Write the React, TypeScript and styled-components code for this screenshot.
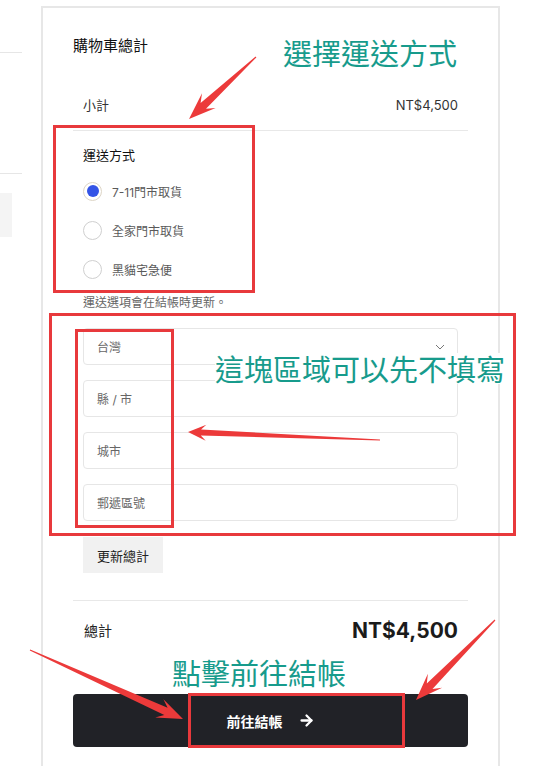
import React from 'react';
import styled, { createGlobalStyle } from 'styled-components';
import { ArrowRight } from 'lucide-react';

const GlobalStyle = createGlobalStyle`
  html, body { margin: 0; padding: 0; background: #fff; }
  body { font-family: Inter, "Noto Sans CJK TC", sans-serif; color: #222; }
  * { box-sizing: border-box; }
`;

const Page = styled.div`
  position: relative;
  width: 541px;
  height: 766px;
  overflow: hidden;
  display: flex;
  align-items: flex-start;
  gap: 19px;
`;

const LeftRail = styled.div`
  width: 22px;
  display: flex;
  flex-direction: column;
  padding-top: 52px;
`;

const RailLine = styled.div<{ $gap: number }>`
  width: 22px;
  height: 1px;
  margin-top: ${(p) => p.$gap}px;
  background: #e6e6e6;
  &:first-child { margin-top: 0; }
`;

const RailBlock = styled.div`
  width: 12px;
  height: 44px;
  margin-top: 19px;
  background: #f4f4f4;
`;

const Card = styled.section`
  width: 459px;
  height: 770px;
  margin-top: 6px;
  border: 2px solid #e7e7e7;
  border-bottom: none;
  padding: 0 30px;
  display: flex;
  flex-direction: column;
`;

const Title = styled.h2`
  margin: 28px 0 0;
  font-size: 15px;
  line-height: 20px;
  font-weight: 400;
  color: #111;
`;

const SummaryRow = styled.div`
  display: flex;
  justify-content: space-between;
  padding: 39px 10px 15px;
  border-bottom: 1px solid #e8e8e8;
  font-size: 13px;
  line-height: 20px;
  color: #333;
`;

const ShippingCell = styled.div`
  padding: 0 10px;
  display: flex;
  flex-direction: column;
`;

const ShipHeading = styled.div`
  margin-top: 15px;
  font-size: 13px;
  line-height: 18px;
  font-weight: 400;
  color: #111;
`;

const RadioList = styled.div`
  margin-top: 17px;
  display: flex;
  flex-direction: column;
  gap: 19px;
`;

const RadioOption = styled.label`
  display: flex;
  align-items: center;
  gap: 10px;
  height: 20px;
  font-size: 12px;
  color: #5a5a5a;
`;

const RadioCircle = styled.span<{ $checked?: boolean }>`
  width: 19px;
  height: 19px;
  border-radius: 50%;
  border: 1px solid ${(p) => (p.$checked ? '#ddd5c6' : '#cfcfcf')};
  background: #fff;
  display: flex;
  align-items: center;
  justify-content: center;
  &::after {
    content: '';
    width: 12px;
    height: 12px;
    border-radius: 50%;
    background: ${(p) => (p.$checked ? '#3454e6' : 'transparent')};
  }
`;

const Note = styled.div`
  margin-top: 15px;
  font-size: 12px;
  line-height: 18px;
  color: #666;
`;

const FieldStack = styled.div`
  margin-top: 16px;
  display: flex;
  flex-direction: column;
  gap: 15px;
`;

const Field = styled.div`
  height: 37px;
  border: 1px solid #e6e6e6;
  border-radius: 4px;
  padding: 0 12px 0 13px;
  display: flex;
  align-items: center;
  justify-content: space-between;
  font-size: 12px;
  color: #666;
`;

const UpdateButton = styled.button`
  margin-top: 16px;
  align-self: flex-start;
  width: 80px;
  height: 36px;
  border: none;
  background: #f1f1f1;
  font-family: inherit;
  font-size: 13px;
  color: #222;
  padding: 0;
`;

const TotalRow = styled.div`
  margin-top: 27px;
  border-top: 1px solid #e8e8e8;
  padding: 18px 10px 0 11px;
  display: flex;
  justify-content: space-between;
  align-items: center;
`;

const TotalLabel = styled.span`
  font-size: 14px;
  line-height: 24px;
  color: #222;
`;

const TotalValue = styled.span`
  font-size: 21px;
  line-height: 24px;
  font-weight: 700;
  color: #1b1b1b;
`;

const CheckoutButton = styled.button`
  margin-top: 51px;
  width: 100%;
  height: 53px;
  border: none;
  border-radius: 4px;
  background: #212227;
  color: #fff;
  font-family: inherit;
  font-size: 14px;
  font-weight: 700;
  display: flex;
  align-items: center;
  justify-content: center;
  gap: 15px;
`;

/* ---------- annotation overlay ---------- */

const Overlay = styled.div`
  position: absolute;
  inset: 0;
  pointer-events: none;
`;

const RedBox = styled.div<{ $x: number; $y: number; $w: number; $h: number }>`
  position: absolute;
  left: ${(p) => p.$x}px;
  top: ${(p) => p.$y}px;
  width: ${(p) => p.$w}px;
  height: ${(p) => p.$h}px;
  border: 3px solid #e8393c;
`;

const Callout = styled.div<{ $x: number; $y: number }>`
  position: absolute;
  left: ${(p) => p.$x}px;
  top: ${(p) => p.$y}px;
  font-family: "Noto Sans CJK TC", sans-serif;
  font-size: 29px;
  line-height: 31px;
  color: #179b8c;
  background: #fff;
  white-space: nowrap;
`;

const ArrowLayer = styled.svg`
  position: absolute;
  left: 0;
  top: 0;
`;

type Arrow = { tx: number; ty: number; hx: number; hy: number; head: number; headW: number; shaftW: number };

const arrows: Arrow[] = [
  { tx: 256, ty: 57, hx: 189, hy: 119, head: 27, headW: 10, shaftW: 4 },
  { tx: 380, ty: 440, hx: 188, hy: 432, head: 18, headW: 8, shaftW: 3 },
  { tx: 30, ty: 650, hx: 183, hy: 719, head: 26, headW: 10, shaftW: 4 },
  { tx: 495, ty: 620, hx: 416, hy: 700, head: 27, headW: 10, shaftW: 4 },
];

function arrowPoints(a: Arrow): string {
  const dx = a.hx - a.tx;
  const dy = a.hy - a.ty;
  const L = Math.hypot(dx, dy);
  const ux = dx / L;
  const uy = dy / L;
  const nx = -uy;
  const ny = ux;
  const bx = a.hx - ux * a.head * 0.72;
  const by = a.hy - uy * a.head * 0.72;
  const wx = a.hx - ux * a.head;
  const wy = a.hy - uy * a.head;
  const t = 0.6;
  const pts = [
    [a.tx + nx * t, a.ty + ny * t],
    [bx + nx * a.shaftW, by + ny * a.shaftW],
    [wx + nx * a.headW, wy + ny * a.headW],
    [a.hx, a.hy],
    [wx - nx * a.headW, wy - ny * a.headW],
    [bx - nx * a.shaftW, by - ny * a.shaftW],
    [a.tx - nx * t, a.ty - ny * t],
  ];
  return pts.map((p) => `${p[0].toFixed(1)},${p[1].toFixed(1)}`).join(' ');
}

const Chevron = () => (
  <svg width="10" height="6" viewBox="0 0 10 6" fill="none">
    <path d="M1 1l4 4 4-4" stroke="#777" strokeWidth="1" />
  </svg>
);

const shippingOptions = [
  { label: '7-11門市取貨', checked: true },
  { label: '全家門市取貨', checked: false },
  { label: '黑貓宅急便', checked: false },
];

export default function App() {
  return (
    <>
      <GlobalStyle />
      <Page>
        <LeftRail>
          <RailLine $gap={0} />
          <RailLine $gap={120} />
          <RailBlock />
        </LeftRail>

        <Card>
          <Title>購物車總計</Title>
          <SummaryRow>
            <span>小計</span>
            <span>NT$4,500</span>
          </SummaryRow>

          <ShippingCell>
            <ShipHeading>運送方式</ShipHeading>
            <RadioList>
              {shippingOptions.map((o) => (
                <RadioOption key={o.label}>
                  <RadioCircle $checked={o.checked} />
                  {o.label}
                </RadioOption>
              ))}
            </RadioList>
            <Note>運送選項會在結帳時更新。</Note>
            <FieldStack>
              <Field>
                台灣
                <Chevron />
              </Field>
              <Field>縣 / 市</Field>
              <Field>城市</Field>
              <Field>郵遞區號</Field>
            </FieldStack>
            <UpdateButton>更新總計</UpdateButton>
          </ShippingCell>

          <TotalRow>
            <TotalLabel>總計</TotalLabel>
            <TotalValue>NT$4,500</TotalValue>
          </TotalRow>

          <CheckoutButton>
            前往結帳
            <ArrowRight size={17} strokeWidth={3.2} />
          </CheckoutButton>
        </Card>

        <Overlay>
          <RedBox $x={53} $y={125} $w={202} $h={168} />
          <RedBox $x={49} $y={313} $w={467} $h={223} />
          <RedBox $x={75} $y={329} $w={99} $h={199} />
          <RedBox $x={188} $y={693} $w={217} $h={55} />
          <Callout $x={283} $y={37}>選擇運送方式</Callout>
          <Callout $x={215} $y={353}>這塊區域可以先不填寫</Callout>
          <Callout $x={172} $y={657}>點擊前往結帳</Callout>
          <ArrowLayer width="541" height="766" viewBox="0 0 541 766">
            {arrows.map((a, i) => (
              <polygon key={i} points={arrowPoints(a)} fill="#ec3a3a" />
            ))}
          </ArrowLayer>
        </Overlay>
      </Page>
    </>
  );
}
